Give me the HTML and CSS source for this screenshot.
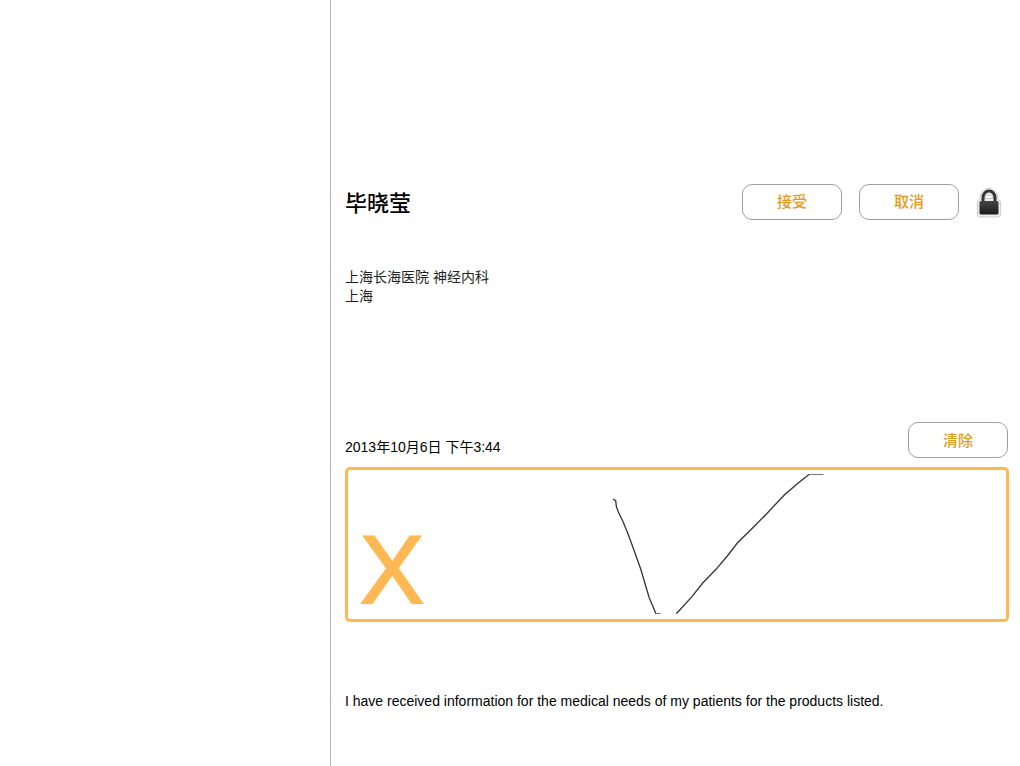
FILE: index.html
```html
<!DOCTYPE html>
<html lang="zh-CN">
<head>
<meta charset="utf-8">
<meta name="viewport" content="width=device-width, initial-scale=1">
<title>毕晓莹</title>
<link rel="stylesheet" href="styles.css">
</head>
<body>
<div class="layout">
  <aside class="sidebar"></aside>
  <main class="content">
    <header class="header">
      <h1 class="name">毕晓莹</h1>
      <button class="button" type="button">接受</button>
      <button class="button" type="button">取消</button>
      <svg class="lock" viewBox="0 0 26 32" role="img" aria-label="锁定">
        <defs>
          <linearGradient id="lock-body" x1="0" y1="0" x2="0" y2="1">
            <stop offset="0" stop-color="#464646"/>
            <stop offset="1" stop-color="#1b1b1b"/>
          </linearGradient>
        </defs>
        <path d="M4 14V11.500A9 9 0 0 1 22 11.500V14Q24.500 14 24.500 16V28Q24.500 31 22 31H4Q1.500 31 1.500 28V16Q1.500 14 4 14Z" fill="#ececec" stroke="#cfcfcf" stroke-width="1"/>
        <path d="M8.500 12.500Q9 9 13 9Q17 9 17.500 12.500Z" fill="#fff" stroke="#c4c4c4"/>
        <path d="M7 16V11.500A6 6.500 0 0 1 19 11.500V16" fill="none" stroke="#333" stroke-width="3"/>
        <rect x="3.500" y="15" width="19" height="13.500" rx="1.500" fill="url(#lock-body)"/>
      </svg>
    </header>
    <address class="workplace">上海长海医院 神经内科<br>上海</address>
    <div class="signing">
      <time class="date" datetime="2013-10-06T15:44">2013年10月6日 下午3:44</time>
      <button class="button" type="button">清除</button>
    </div>
    <div class="pad">
      <span class="mark">X</span>
      <svg class="signature" viewBox="0 0 658 149" role="img" aria-label="签名">
        <path d="M265 29L267.700 30.700L268.300 36L270.300 42L274.300 50L279.300 62L285.300 78.300L292.700 99L297.700 116L301.300 128L308 143.700"/>
        <path d="M328.300 143.700L344 126.700L354.700 113L368 99.300L379.300 86L389.300 73L404.300 58.300L418.700 43.700L436.300 25L449.300 13.700L461 4.500"/>
        <path class="stroke-end" d="M308 143.500H312.500M461 4.500H475.500"/>
      </svg>
    </div>
    <p class="statement">I have received information for the medical needs of my patients for the products listed.</p>
  </main>
</div>
</body>
</html>
```
FILE: styles.css
```css
* {
  box-sizing: border-box;
}

body {
  margin: 0;
  background: #fff;
  color: #111;
  font: 14px/19px "Liberation Sans", "Noto Sans CJK SC", sans-serif;
}

.layout {
  display: flex;
  min-height: 100vh;
}

.sidebar {
  flex: 0 0 331px;
  border-right: 1px solid #b4b4b4;
}

.content {
  flex: 1;
  min-width: 0;
  padding: 182px 11px 0 14px;
}

.header {
  display: flex;
  align-items: center;
  gap: 17px;
  padding-right: 7px;
}

.name {
  flex: 1;
  margin: 0;
  padding-top: 4px;
  color: #000;
  font-size: 22px;
  font-weight: 500;
  line-height: 35px;
}

.button {
  width: 100px;
  height: 36px;
  padding: 0;
  border: 1px solid #a0a0a0;
  border-radius: 10px;
  background: #fff;
  color: #e39a1c;
  font: inherit;
  font-size: 15px;
  font-weight: 500;
}

.lock {
  width: 26px;
  height: 32px;
}

.workplace {
  margin-top: 47px;
  color: #222;
  font-style: normal;
}

.signing {
  display: flex;
  align-items: flex-end;
  justify-content: space-between;
  margin-top: 116px;
  padding-right: 1px;
}

.date {
  padding-bottom: 1px;
  color: #000;
}

.pad {
  display: grid;
  align-items: end;
  margin-top: 9px;
  border: 3px solid #ffb854;
  border-radius: 5px;
}

.mark,
.signature {
  grid-area: 1 / 1;
}

.mark {
  padding: 0 12px;
  color: #ffb854;
  font-size: 96px;
  line-height: 98px;
  -webkit-text-stroke: 2px #ffb854;
}

.signature {
  width: 100%;
  fill: none;
  stroke: #333;
  stroke-width: 1.300;
}

.stroke-end {
  stroke: #777;
  stroke-width: 1;
}

.statement {
  margin: 70px 0 0;
  color: #000;
}
```
